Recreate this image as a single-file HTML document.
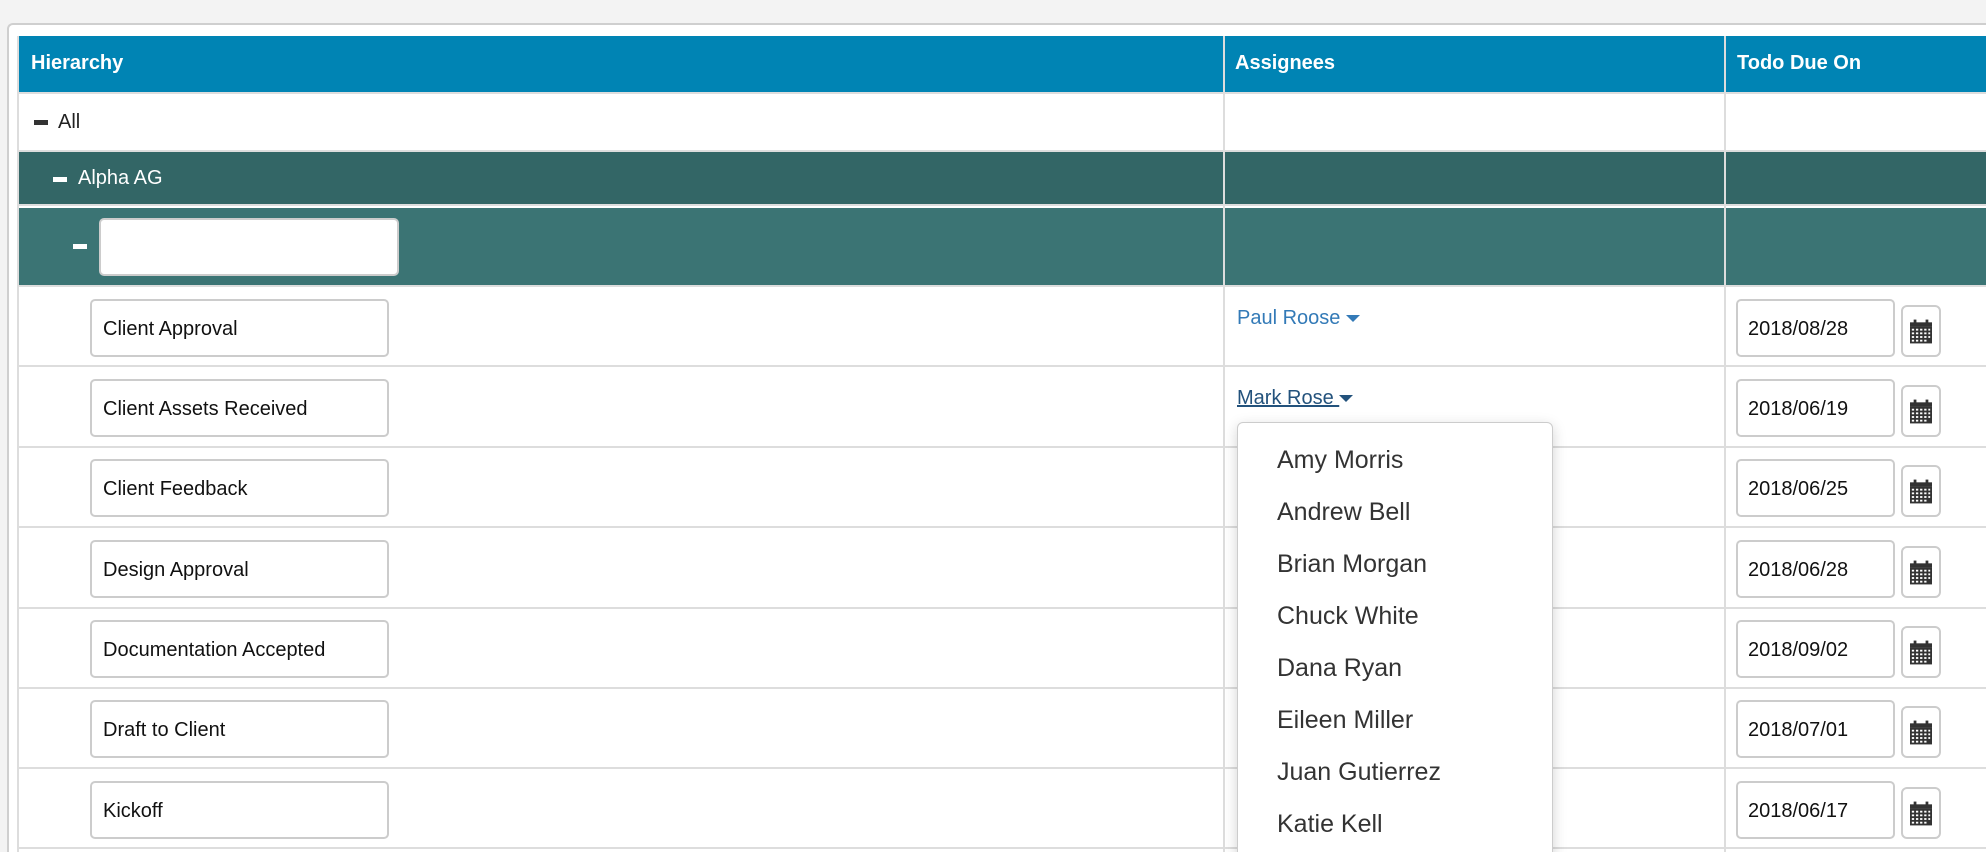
<!DOCTYPE html>
<html style="width:1986px;height:852px;overflow:hidden"><head><meta charset="utf-8"><style>
*{box-sizing:border-box;margin:0;padding:0}
body{width:1986px;height:852px;overflow:hidden;background:#f3f3f3;font-family:"Liberation Sans",sans-serif;position:relative}
.abs{position:absolute}
.panel{left:7px;top:23px;width:1979px;height:829px;background:#fff;border:2px solid #cfcfcf;border-bottom:none;border-right:none;border-radius:6px 0 0 0}
.hdr{left:19px;top:36px;width:1967px;height:56px;background:#0084b4;color:#fff;font-weight:bold;font-size:20px}
.hdr span{position:absolute;top:16px}
.row{left:19px;width:1967px;border-bottom:2px solid #ddd;background:#fff}
.vl{top:36px;width:2px;height:816px;background:#ddd}
.inp{left:90px;width:299px;height:58px;border:2px solid #ccc;border-radius:5px;background:#fff;font-size:20px;padding:17px 0 0 11px;color:#111}
.date{left:1736px;width:159px;height:58px;border:2px solid #ccc;border-radius:5px;background:#fff;font-size:20px;padding:17px 0 0 10px;color:#111}
.btn{left:1901px;width:40px;height:52px;border:2px solid #ccc;border-radius:6px;background:#fff}
.dd{left:1237px;top:422px;width:316px;height:440px;background:#fff;border:1px solid #ccc;border-radius:6px;box-shadow:0 4px 14px rgba(0,0,0,.18)}
.dd div{position:absolute;left:39px;font-size:25px;color:#333}
</style></head><body>
<div class="abs panel"></div>
<div class="abs hdr"><span style="left:12px">Hierarchy</span><span style="left:1216px">Assignees</span><span style="left:1718px">Todo Due On</span></div>
<div class="abs row" style="top:92px;height:60px;border-top:2px solid #ddd"></div>
<div class="abs" style="left:34px;top:120px;width:14px;height:5px;background:#333"></div>
<div class="abs" style="left:58px;top:111px;font-size:20px;color:#222">All</div>
<div class="abs" style="left:19px;top:152px;width:1967px;height:54px;background:#336666;border-bottom:2px solid #ddd"></div>
<div class="abs" style="left:53px;top:177px;width:14px;height:5px;background:#fff"></div>
<div class="abs" style="left:78px;top:167px;font-size:20px;color:#fff">Alpha AG</div>
<div class="abs" style="left:19px;top:208px;width:1967px;height:79px;background:#3b7474;border-bottom:2px solid #ddd"></div>
<div class="abs" style="left:73px;top:244px;width:14px;height:5px;background:#fff"></div>
<div class="abs" style="left:99px;top:218px;width:300px;height:58px;background:#fff;border:2px solid #ccc;border-radius:5px"></div>

<div class="abs row" style="top:287px;height:80px"></div>
<div class="abs row" style="top:367px;height:81px"></div>
<div class="abs row" style="top:448px;height:80px"></div>
<div class="abs row" style="top:528px;height:81px"></div>
<div class="abs row" style="top:609px;height:80px"></div>
<div class="abs row" style="top:689px;height:80px"></div>
<div class="abs row" style="top:769px;height:80px"></div>
<div class="abs row" style="top:849px;height:3px;border-bottom:none"></div>

<div class="abs vl" style="left:17px"></div>
<div class="abs vl" style="left:1223px"></div>
<div class="abs vl" style="left:1724px"></div>

<div class="abs inp" style="top:299px">Client Approval</div>
<div class="abs inp" style="top:379px">Client Assets Received</div>
<div class="abs inp" style="top:459px">Client Feedback</div>
<div class="abs inp" style="top:540px">Design Approval</div>
<div class="abs inp" style="top:620px">Documentation Accepted</div>
<div class="abs inp" style="top:700px">Draft to Client</div>
<div class="abs inp" style="top:781px">Kickoff</div>

<div class="abs date" style="top:299px">2018/08/28</div>
<div class="abs date" style="top:379px">2018/06/19</div>
<div class="abs date" style="top:459px">2018/06/25</div>
<div class="abs date" style="top:540px">2018/06/28</div>
<div class="abs date" style="top:620px">2018/09/02</div>
<div class="abs date" style="top:700px">2018/07/01</div>
<div class="abs date" style="top:781px">2018/06/17</div>

<svg width="0" height="0" style="position:absolute"><defs><symbol id="cal" viewBox="0 0 24 26"><rect x="4" y="0" width="3" height="4" fill="#333"/><rect x="17" y="0" width="3" height="4" fill="#333"/><rect x="0" y="3" width="24" height="5" fill="#333"/><rect x="0" y="8" width="24" height="18" fill="#333"/><g fill="#fff"><rect x="2" y="10" width="2.5" height="2"/><rect x="6.5" y="10" width="2.5" height="2"/><rect x="11" y="10" width="2.5" height="2"/><rect x="15.5" y="10" width="2.5" height="2"/><rect x="20" y="10" width="2" height="2"/><rect x="2" y="14" width="2.5" height="2"/><rect x="6.5" y="14" width="2.5" height="2"/><rect x="11" y="14" width="2.5" height="2"/><rect x="15.5" y="14" width="2.5" height="2"/><rect x="20" y="14" width="2" height="2"/><rect x="2" y="18" width="2.5" height="2"/><rect x="6.5" y="18" width="2.5" height="2"/><rect x="11" y="18" width="2.5" height="2"/><rect x="15.5" y="18" width="2.5" height="2"/><rect x="20" y="18" width="2" height="2"/><rect x="2" y="22" width="2.5" height="2"/><rect x="6.5" y="22" width="2.5" height="2"/><rect x="11" y="22" width="2.5" height="2"/><rect x="15.5" y="22" width="2.5" height="2"/></g></symbol></defs></svg>
<div class="abs btn" style="top:305px"><svg width="22" height="25" style="position:absolute;left:7px;top:12px"><use href="#cal"/></svg></div>
<div class="abs btn" style="top:385px"><svg width="22" height="25" style="position:absolute;left:7px;top:12px"><use href="#cal"/></svg></div>
<div class="abs btn" style="top:465px"><svg width="22" height="25" style="position:absolute;left:7px;top:12px"><use href="#cal"/></svg></div>
<div class="abs btn" style="top:546px"><svg width="22" height="25" style="position:absolute;left:7px;top:12px"><use href="#cal"/></svg></div>
<div class="abs btn" style="top:626px"><svg width="22" height="25" style="position:absolute;left:7px;top:12px"><use href="#cal"/></svg></div>
<div class="abs btn" style="top:706px"><svg width="22" height="25" style="position:absolute;left:7px;top:12px"><use href="#cal"/></svg></div>
<div class="abs btn" style="top:787px"><svg width="22" height="25" style="position:absolute;left:7px;top:12px"><use href="#cal"/></svg></div>

<div class="abs" style="left:1237px;top:307px;font-size:20px;color:#337ab7">Paul Roose <span style="display:inline-block;width:0;height:0;border-left:7px solid transparent;border-right:7px solid transparent;border-top:7px solid #337ab7;vertical-align:middle"></span></div>
<div class="abs" style="left:1237px;top:387px;font-size:20px;color:#23527c"><span style="text-decoration:underline">Mark Rose </span><span style="display:inline-block;width:0;height:0;border-left:7px solid transparent;border-right:7px solid transparent;border-top:7px solid #23527c;vertical-align:middle"></span></div>

<div class="abs dd">
<div style="top:23px">Amy Morris</div>
<div style="top:75px">Andrew Bell</div>
<div style="top:127px">Brian Morgan</div>
<div style="top:179px">Chuck White</div>
<div style="top:231px">Dana Ryan</div>
<div style="top:283px">Eileen Miller</div>
<div style="top:335px">Juan Gutierrez</div>
<div style="top:387px">Katie Kell</div>
</div>
</body></html>
